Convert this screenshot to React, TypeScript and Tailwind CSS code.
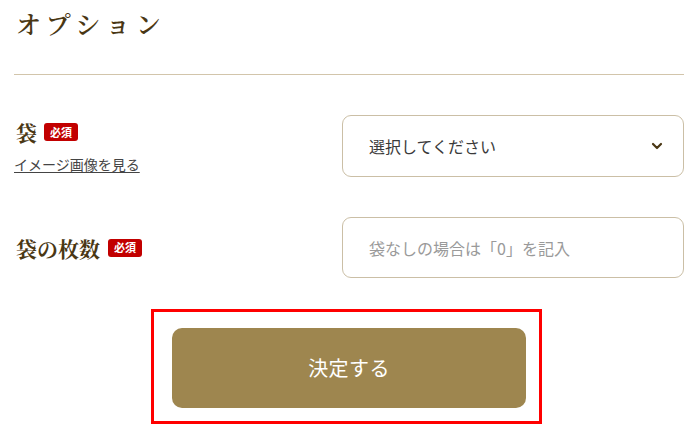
import React from 'react';

const serif = { fontFamily: '"Noto Serif CJK JP", "Liberation Serif", "Noto Sans CJK JP", serif' };

function Badge() {
  return (
    <span className="inline-flex items-center justify-center h-[18px] w-[34px] rounded-[3px] bg-[#c20000] text-white text-[11px] font-bold leading-none font-['Noto_Sans_CJK_JP',sans-serif]">
      必須
    </span>
  );
}

export default function App() {
  return (
    <div className="w-[697px] h-[436px] bg-white px-[14px] pr-[13px] font-['Noto_Sans_CJK_JP',sans-serif]">
      {/* Title */}
      <div className="h-[75px] border-b border-[#d2c5ab] pt-[6px] pl-[2px]">
        <h1 style={serif} className="text-[25px] font-semibold tracking-[0.22em] text-[#4a3714] leading-[34px]">
          オプション
        </h1>
      </div>

      {/* Rows */}
      <div className="grid grid-cols-[328px_342px] mt-[40px] gap-y-[40px]">
        <div className="flex flex-col justify-center pl-[2px]">
          <div className="flex items-center gap-[7px]">
            <span style={serif} className="text-[21px] font-bold text-[#4a3714] leading-[26px]">袋</span>
            <Badge />
          </div>
          <a className="mt-[10px] -ml-[2px] text-[14px] text-[#444] underline underline-offset-2 leading-[18px]">
            イメージ画像を見る
          </a>
        </div>
        <div className="h-[62px] rounded-[9px] border border-[#cbbfa6] flex items-center justify-between pl-[26px] pr-[20px]">
          <span className="text-[16px] text-[#3a3a3a]">選択してください</span>
          <svg width="12" height="8" viewBox="0 0 12 8" fill="none">
            <path d="M2 2l4 4 4-4" stroke="#4a3714" strokeWidth="2.2" strokeLinecap="round" strokeLinejoin="round" />
          </svg>
        </div>

        <div className="flex items-center gap-[8px] pl-[2px]">
          <span style={serif} className="text-[21px] font-bold text-[#4a3714] leading-[26px]">袋の枚数</span>
          <Badge />
        </div>
        <div className="h-[61px] rounded-[9px] border border-[#cbbfa6] flex items-center pl-[26px]">
          <span className="text-[16px] text-[#9a9a9a]">袋なしの場合は「0」を記入</span>
        </div>
      </div>

      {/* Submit */}
      <div className="mt-[31px] ml-[137px] w-[391px] h-[115px] border-[3px] border-[#ff0000] pt-[16px] pl-[18px] pr-[13px]">
        <button className="w-full h-[80px] rounded-[10px] bg-[#9e864f] text-white text-[20px] tracking-[0.02em]">
          決定する
        </button>
      </div>
    </div>
  );
}
